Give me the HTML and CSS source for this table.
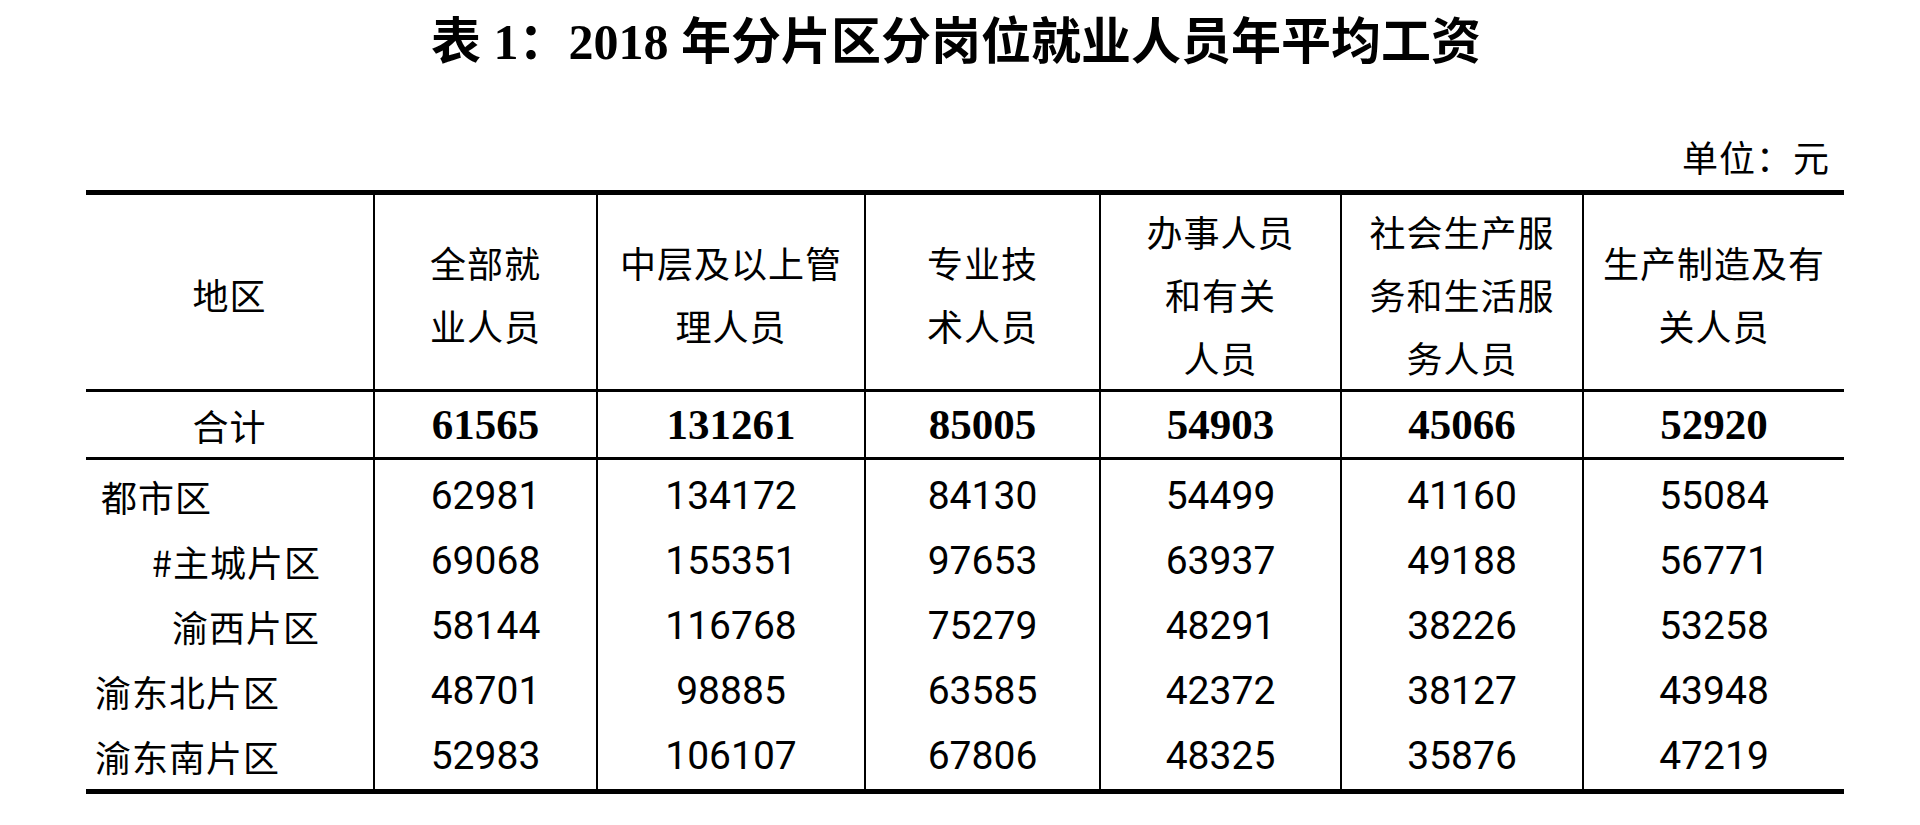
FILE: index.html
```html
<!DOCTYPE html>
<html lang="zh-CN">
<head>
<meta charset="utf-8">
<title>表1：2018年分片区分岗位就业人员年平均工资</title>
<link rel="stylesheet" href="styles.css">
</head>
<body>
<div class="page">
  <h1 class="title">表 1：2018 年分片区分岗位就业人员年平均工资</h1>
  <div class="unit">单位：元</div>
  <table class="wage">
    <colgroup>
      <col class="c1"><col class="c2"><col class="c3"><col class="c4"><col class="c5"><col class="c6"><col class="c7">
    </colgroup>
    <thead>
      <tr class="head">
        <th>地区</th>
        <th>全部就<br>业人员</th>
        <th>中层及以上管<br>理人员</th>
        <th>专业技<br>术人员</th>
        <th>办事人员<br>和有关<br>人员</th>
        <th>社会生产服<br>务和生活服<br>务人员</th>
        <th>生产制造及有<br>关人员</th>
      </tr>
    </thead>
    <tbody>
      <tr class="total">
        <td class="region center">合计</td>
        <td class="num">61565</td>
        <td class="num">131261</td>
        <td class="num">85005</td>
        <td class="num">54903</td>
        <td class="num">45066</td>
        <td class="num">52920</td>
      </tr>
      <tr class="row first">
        <td class="region lv0">都市区</td>
        <td class="num">62981</td>
        <td class="num">134172</td>
        <td class="num">84130</td>
        <td class="num">54499</td>
        <td class="num">41160</td>
        <td class="num">55084</td>
      </tr>
      <tr class="row">
        <td class="region lv1">#主城片区</td>
        <td class="num">69068</td>
        <td class="num">155351</td>
        <td class="num">97653</td>
        <td class="num">63937</td>
        <td class="num">49188</td>
        <td class="num">56771</td>
      </tr>
      <tr class="row">
        <td class="region lv2">渝西片区</td>
        <td class="num">58144</td>
        <td class="num">116768</td>
        <td class="num">75279</td>
        <td class="num">48291</td>
        <td class="num">38226</td>
        <td class="num">53258</td>
      </tr>
      <tr class="row">
        <td class="region lvm">渝东北片区</td>
        <td class="num">48701</td>
        <td class="num">98885</td>
        <td class="num">63585</td>
        <td class="num">42372</td>
        <td class="num">38127</td>
        <td class="num">43948</td>
      </tr>
      <tr class="row last">
        <td class="region lvm">渝东南片区</td>
        <td class="num">52983</td>
        <td class="num">106107</td>
        <td class="num">67806</td>
        <td class="num">48325</td>
        <td class="num">35876</td>
        <td class="num">47219</td>
      </tr>
    </tbody>
  </table>
</div>
</body>
</html>
```

FILE: styles.css
```css
html, body {
  margin: 0;
  padding: 0;
  background: #ffffff;
}

body {
  color: #000;
  font-family: "Noto Sans CJK SC", "Noto Sans", sans-serif;
}

.page {
  width: 1920px;
  height: 825px;
  overflow: hidden;
  padding-top: 12px;
  box-sizing: border-box;
}

.title {
  margin: 0;
  text-align: center;
  font-family: "Liberation Serif", "Noto Sans CJK SC", serif;
  font-weight: 700;
  font-size: 50px;
  line-height: 60px;
  padding-right: 8px;
}

.unit {
  width: 1758px;
  margin: 62px 0 0 86px;
  box-sizing: border-box;
  padding-right: 14px;
  text-align: right;
  font-size: 36px;
  line-height: 44px;
  letter-spacing: 1px;
}

.wage {
  margin: 12px 0 0 86px;
  width: 1758px;
  table-layout: fixed;
  border-collapse: collapse;
  border-top: 5px solid #000;
  border-bottom: 5px solid #000;
}

.c1 { width: 288px; }
.c2 { width: 223px; }
.c3 { width: 268px; }
.c4 { width: 235px; }
.c5 { width: 241px; }
.c6 { width: 242px; }
.c7 { width: 261px; }

.wage th,
.wage td {
  padding: 0;
  border-left: 2px solid #000;
  text-align: center;
  vertical-align: middle;
  white-space: nowrap;
}

.wage th:first-child,
.wage td:first-child {
  border-left: none;
}

.head th {
  height: 198px;
  font-weight: 400;
  font-size: 36px;
  line-height: 63px;
  letter-spacing: 1px;
  padding-top: 4px;
  box-sizing: border-box;
  border-bottom: 3px solid #000;
}

.total td {
  height: 65px;
  border-bottom: 3px solid #000;
}

.total .num {
  font-family: "Liberation Serif", serif;
  font-weight: 700;
  font-size: 43px;
}

.region {
  font-size: 36px;
  letter-spacing: 1px;
  text-align: left;
}

.region.center {
  text-align: center;
}

.row td {
  height: 65px;
}

.row.first td {
  padding-top: 3px;
}

.row.last td {
  height: 66px;
}

.row .num {
  font-family: "Roboto", "Liberation Sans", sans-serif;
  font-size: 39px;
}

.wage td.lv0 { padding-left: 15px; text-align: left; }
.wage td.lv1 { padding-left: 66px; text-align: left; }
.wage td.lv2 { padding-left: 86px; text-align: left; }
.wage td.lvm { padding-left: 9px; text-align: left; }
```
